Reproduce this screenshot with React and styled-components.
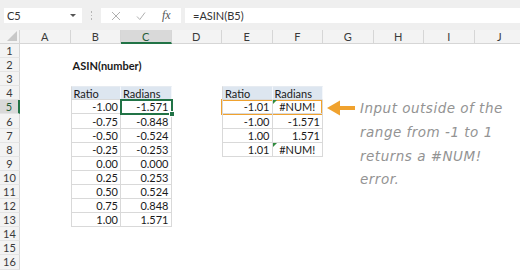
import React from "react"
import styled, { createGlobalStyle } from "styled-components"

const GlobalStyle = createGlobalStyle`
  html, body {
    margin: 0;
    padding: 0;
    background: #ffffff;
    overflow: hidden;
  }
  body {
    font-family: Lato, "Liberation Sans", sans-serif;
  }
`

const COLS = ["A", "B", "C", "D", "E", "F", "G", "H", "I", "J"]
const ROWS = Array.from({ length: 16 }, (_, i) => i + 1)

// cell contents, keyed by address
const cells = {
  B2: { v: "ASIN(number)", bold: true, align: "left" },
  B4: { v: "Ratio", align: "left" },
  C4: { v: "Radians", align: "left" },
  E4: { v: "Ratio", align: "left" },
  F4: { v: "Radians", align: "left" },
}
const ratios = ["-1.00", "-0.75", "-0.50", "-0.25", "0.00", "0.25", "0.50", "0.75", "1.00"]
const radians = ["-1.571", "-0.848", "-0.524", "-0.253", "0.000", "0.253", "0.524", "0.848", "1.571"]
ratios.forEach((v, i) => (cells["B" + (i + 5)] = { v }))
radians.forEach((v, i) => (cells["C" + (i + 5)] = { v }))
const ratios2 = ["-1.01", "-1.00", "1.00", "1.01"]
const radians2 = ["#NUM!", "-1.571", "1.571", "#NUM!"]
ratios2.forEach((v, i) => (cells["E" + (i + 5)] = { v }))
radians2.forEach((v, i) => {
  const err = v.startsWith("#")
  cells["F" + (i + 5)] = { v, align: err ? "center" : "right", flag: err }
})

const tables = [
  { c1: 1, c2: 2, r1: 4, r2: 13 },
  { c1: 4, c2: 5, r1: 4, r2: 8 },
]

const tableInfo = (ci, r) => {
  const t = tables.find((t) => ci >= t.c1 && ci <= t.c2 && r >= t.r1 && r <= t.r2)
  if (!t) return null
  return { left: ci === t.c1, top: r === t.r1, head: r === t.r1 }
}

const TopBar = styled.div`
  height: 30px;
  background: #efefef;
  display: flex;
  align-items: flex-start;
  padding: 8px 0 0 4px;
  box-sizing: border-box;
`

const NameBox = styled.div`
  width: 78px;
  height: 15px;
  background: #fff;
  display: flex;
  align-items: center;
  justify-content: space-between;
  padding: 0 6px 0 3px;
  box-sizing: border-box;
  font-size: 11px;
  color: #333;
`

const Caret = styled.span`
  width: 0;
  height: 0;
  border-left: 3px solid transparent;
  border-right: 3px solid transparent;
  border-top: 3px solid #555;
`

const Dots = styled.div`
  width: 19px;
  height: 15px;
  display: flex;
  flex-direction: column;
  align-items: center;
  justify-content: center;
  gap: 2px;
  span {
    width: 1.5px;
    height: 1.5px;
    background: #b5b5b5;
  }
`

const IconBox = styled.div`
  width: 80px;
  height: 15px;
  background: #fff;
  display: flex;
  align-items: center;
  padding-left: 10px;
  box-sizing: border-box;
  gap: 15px;
`

const Fx = styled.span`
  font-family: "Liberation Serif", serif;
  font-style: italic;
  font-size: 12px;
  color: #555;
  margin-left: 1px;
`

const FormulaBox = styled.div`
  flex: 1;
  height: 15px;
  background: #fff;
  margin-left: 4px;
  display: flex;
  align-items: center;
  padding-left: 8px;
  font-size: 11px;
  color: #333;
`

const Sheet = styled.div`
  display: grid;
  grid-template-columns: 20px repeat(10, 50.5px);
  grid-template-rows: 14px repeat(16, 14.1px);
  background: #fff;
`

const Corner = styled.div`
  grid-column: 1;
  grid-row: 1;
  background: #f3f3f3;
  border-right: 1px solid #d6d6d6;
  border-bottom: 1px solid #d6d6d6;
  box-sizing: border-box;
  position: relative;
  &::after {
    content: "";
    position: absolute;
    right: 2px;
    bottom: 2px;
    border-left: 10px solid transparent;
    border-bottom: 10px solid #c8c8c8;
  }
`

const ColHead = styled.div`
  grid-column: ${(p) => p.$c};
  grid-row: 1;
  background: ${(p) => (p.$active ? "#d9d9d9" : "#f3f3f3")};
  border-right: 1px solid #d6d6d6;
  border-bottom: ${(p) => (p.$active ? "2px solid #217346" : "1px solid #d6d6d6")};
  box-sizing: border-box;
  display: flex;
  align-items: center;
  justify-content: center;
  font-size: 11px;
  color: ${(p) => (p.$active ? "#1f5c38" : "#3a3a3a")};
`

const RowHead = styled.div`
  grid-column: 1;
  grid-row: ${(p) => p.$r};
  background: ${(p) => (p.$active ? "#d9d9d9" : "#f3f3f3")};
  border-right: ${(p) => (p.$active ? "2px solid #217346" : "1px solid #d6d6d6")};
  border-bottom: 1px solid #e4e4e4;
  box-sizing: border-box;
  display: flex;
  align-items: center;
  justify-content: center;
  font-size: 11px;
  color: ${(p) => (p.$active ? "#1f5c38" : "#3a3a3a")};
`

const Cell = styled.div`
  grid-column: ${(p) => p.$c};
  grid-row: ${(p) => p.$r};
  box-sizing: border-box;
  display: flex;
  align-items: center;
  justify-content: ${(p) =>
    p.$align === "left" ? "flex-start" : p.$align === "center" ? "center" : "flex-end"};
  padding: 0 2px;
  font-size: 11px;
  font-weight: ${(p) => (p.$bold ? 700 : 400)};
  color: #1a1a1a;
  white-space: nowrap;
  overflow: visible;
  position: relative;
  background: ${(p) => (p.$head ? "#dde6f0" : "transparent")};
  ${(p) =>
    p.$table &&
    `
    border-right: 1px solid ${p.$head ? "#f4f7fb" : "#d9d9d9"};
    border-bottom: 1px solid #d9d9d9;
  `}
  ${(p) => p.$table && p.$left && `border-left: 1px solid #d9d9d9;`}
  ${(p) => p.$table && p.$top && `border-top: 1px solid #e6ebf1;`}
  ${(p) =>
    p.$flag &&
    `
    &::before {
      content: "";
      position: absolute;
      left: 0;
      top: 0;
      border-top: 4px solid #2e8b3e;
      border-right: 4px solid transparent;
    }
  `}
`

const ActiveCell = styled.div`
  grid-column: ${(p) => p.$c};
  grid-row: ${(p) => p.$r};
  border: 2px solid #217346;
  margin: -1px;
  position: relative;
  pointer-events: none;
  &::after {
    content: "";
    position: absolute;
    right: -4px;
    bottom: -4px;
    width: 4px;
    height: 4px;
    background: #217346;
    border: 1px solid #fff;
  }
`

const Highlight = styled.div`
  grid-column: ${(p) => p.$c};
  grid-row: ${(p) => p.$r};
  border: 2.5px solid #f0a22e;
  margin: -1px 0 -1px -1px;
  pointer-events: none;
`

const Note = styled.div`
  grid-column: 8 / -1;
  grid-row: 6 / span 6;
  display: flex;
  align-items: flex-start;
  padding-left: 4px;
`

const NoteText = styled.div`
  margin: -3px 0 0 5px;
  font-family: "DejaVu Sans", sans-serif;
  font-style: italic;
  font-weight: 300;
  font-size: 13.5px;
  letter-spacing: 0.5px;
  line-height: 23.7px;
  color: #939393;
  white-space: nowrap;
`

const Arrow = () => (
  <svg width="28" height="16" viewBox="0 0 28 16">
    <path d="M0 8 L13 0.5 L13 15.5 Z" fill="#f0a22e" />
    <rect x="12" y="6" width="16" height="4" fill="#f0a22e" />
  </svg>
)

const XIcon = () => (
  <svg width="10" height="10" viewBox="0 0 10 10">
    <path d="M1 1 L9 9 M9 1 L1 9" stroke="#b0b0b0" strokeWidth="1" />
  </svg>
)

const CheckIcon = () => (
  <svg width="10" height="10" viewBox="0 0 10 10">
    <path d="M1 5.5 L3.8 8.5 L9 1.5" stroke="#b0b0b0" strokeWidth="1" fill="none" />
  </svg>
)

export default function App() {
  return (
    <>
      <GlobalStyle />
      <TopBar>
        <NameBox>
          C5
          <Caret />
        </NameBox>
        <Dots>
          <span />
          <span />
          <span />
        </Dots>
        <IconBox>
          <XIcon />
          <CheckIcon />
          <Fx>fx</Fx>
        </IconBox>
        <FormulaBox>=ASIN(B5)</FormulaBox>
      </TopBar>
      <Sheet>
        <Corner />
        {COLS.map((c, ci) => (
          <ColHead key={c} $c={ci + 2} $active={c === "C"}>
            {c}
          </ColHead>
        ))}
        {ROWS.map((r) => (
          <React.Fragment key={r}>
            <RowHead $r={r + 1} $active={r === 5}>
              {r}
            </RowHead>
            {COLS.map((c, ci) => {
              const cell = cells[c + r]
              const t = tableInfo(ci, r)
              return (
                <Cell
                  key={c + r}
                  $c={ci + 2}
                  $r={r + 1}
                  $table={!!t}
                  $left={t && t.left}
                  $top={t && t.top}
                  $head={t && t.head}
                  $align={cell && cell.align}
                  $bold={cell && cell.bold}
                  $flag={cell && cell.flag}
                >
                  {cell ? cell.v : null}
                </Cell>
              )
            })}
          </React.Fragment>
        ))}
        <ActiveCell $c="4" $r="6" />
        <Highlight $c="6 / 8" $r="6" />
        <Note>
          <Arrow />
          <NoteText>
            Input outside of the
            <br />
            range from -1 to 1
            <br />
            returns a #NUM!
            <br />
            error.
          </NoteText>
        </Note>
      </Sheet>
    </>
  )
}
